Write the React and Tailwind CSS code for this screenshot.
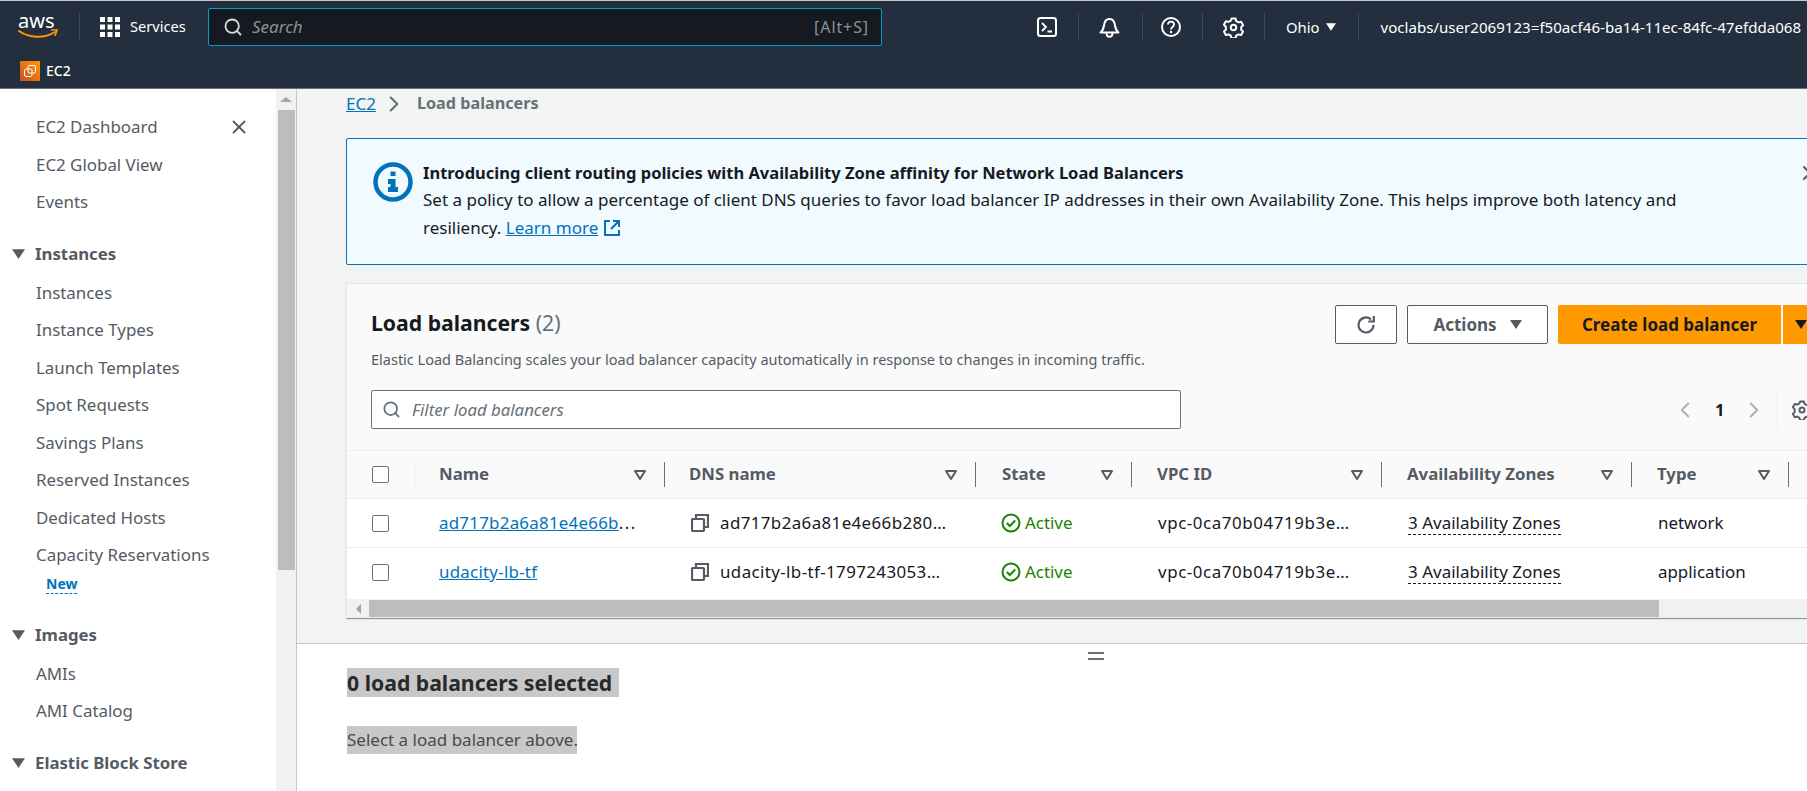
import { Search, X, ChevronRight, ChevronLeft } from 'lucide-react';

const font = "font-['Noto_Sans',sans-serif]";

const AwsLogo = () => (
  <svg width="40" height="26" viewBox="0 0 40 26" className="overflow-visible">
    <text x="0" y="14" fill="#fff" fontSize="20" fontFamily="Noto Sans, sans-serif">aws</text>
    <path d="M1 17c10 7 25 8 36 1" fill="none" stroke="#f90" strokeWidth="2" strokeLinecap="round" />
    <path d="M33 16h6l-2 6" fill="none" stroke="#f90" strokeWidth="1.6" />
  </svg>
);

const GridIcon = () => (
  <svg width="20" height="20" viewBox="0 0 20 20" fill="#fff">
    {[0, 7.5, 15].map((y) => [0, 7.5, 15].map((x) => <rect key={`${x}-${y}`} x={x} y={y} width="5" height="5" />))}
  </svg>
);

const Ec2Icon = () => (
  <div className="w-5 h-5 shrink-0 bg-gradient-to-tr from-[#c8511b] to-[#ff9900] flex items-center justify-center">
    <svg width="16" height="16" viewBox="0 0 16 16" fill="none" stroke="#fff" strokeWidth="1">
      <rect x="6" y="2.5" width="7.5" height="7.5" rx="1.5" />
      <rect x="2.5" y="6" width="7.5" height="7.5" rx="1.5" />
    </svg>
  </div>
);

const TerminalIcon = () => (
  <svg width="20" height="20" viewBox="0 0 20 20" fill="none" stroke="#fff" strokeWidth="2">
    <rect x="1" y="1" width="18" height="18" rx="2.5" />
    <path d="M5 6l4 4-4 4M10.5 14.5H15" strokeWidth="1.8" />
  </svg>
);

const BellIcon = () => (
  <svg width="21" height="21" viewBox="0 0 21 21" fill="none" stroke="#fff" strokeWidth="2">
    <path d="M1.5 15.5c2.5-2 3-3.500 3.500-7C5.500 4 7.500 2 10.500 2s5 2 5.500 6.500c.5 3.500 1 5 3.500 7z" strokeLinejoin="round" />
    <path d="M7.500 16c0 5 6 5 6 0" />
  </svg>
);

const HelpIcon = () => (
  <svg width="20" height="20" viewBox="0 0 20 20" fill="none" stroke="#fff" strokeWidth="2">
    <circle cx="10" cy="10" r="9" />
    <path d="M7 7.500C7 3.500 13 3.800 13 7.500c0 2.500-3 2.500-3 5" strokeWidth="1.8" />
    <circle cx="10" cy="15" r="1.200" fill="#fff" stroke="none" />
  </svg>
);

const GearIcon = ({ color = '#fff', size = 21 }) => (
  <svg width={size} height={size} viewBox="0 0 21 21" fill="none" stroke={color} strokeWidth="2">
    <path d="M8.500 1.500h4l.7 2.600 2.300 1.300 2.600-.7 2 3.500-1.900 1.900v2.600l1.900 1.900-2 3.500-2.600-.7-2.300 1.300-.7 2.600h-4l-.7-2.600-2.300-1.300-2.600.7-2-3.500 1.900-1.900V9.600L.9 7.700l2-3.500 2.600.7 2.300-1.300z" strokeLinejoin="round" />
    <circle cx="10.500" cy="10.500" r="2.700" />
  </svg>
);

const InfoIcon = () => (
  <svg width="40" height="40" viewBox="0 0 40 40" className="shrink-0">
    <circle cx="20" cy="20" r="17.500" fill="none" stroke="#0073bb" strokeWidth="4.500" />
    <rect x="17.500" y="9.500" width="5" height="4.500" fill="#0073bb" />
    <path d="M15 17h7.500v8H25v5H15v-5h2.500v-3H15z" fill="#0073bb" />
  </svg>
);

const ExternalIcon = () => (
  <svg width="18" height="18" viewBox="0 0 18 18" fill="none" stroke="#0073bb" strokeWidth="2" className="inline-block ml-[5px] align-[-3px]">
    <path d="M7 2H2v14h14v-5" />
    <path d="M10 2h6v6M16 2L8 10" />
  </svg>
);

const FilterCaret = () => (
  <svg width="12" height="10" viewBox="0 0 12 10" fill="none" stroke="#545b64" strokeWidth="2" className="shrink-0">
    <path d="M1 1h10L6 9z" strokeLinejoin="round" />
  </svg>
);

const SolidCaret = ({ color = '#545b64', w = 12, h = 9 }) => (
  <svg width={w} height={h} viewBox="0 0 12 9" fill={color} className="shrink-0">
    <path d="M0 0h12L6 9z" />
  </svg>
);

const CopyIcon = () => (
  <svg width="18" height="18" viewBox="0 0 18 18" fill="none" stroke="#545b64" strokeWidth="2.200" className="shrink-0">
    <rect x="1" y="5" width="12" height="12" rx="1" />
    <path d="M5 4.500V1h12v12h-3.500" />
  </svg>
);

const ActiveIcon = () => (
  <svg width="20" height="20" viewBox="0 0 20 20" fill="none" stroke="#1d8102" strokeWidth="2" className="shrink-0">
    <circle cx="10" cy="10" r="8.500" />
    <path d="M5.800 10l3 3 5.400-5.500" />
  </svg>
);

const RefreshIcon = () => (
  <svg width="20" height="20" viewBox="0 0 20 20" fill="none" stroke="#545b64" strokeWidth="2.200" >
    <path d="M17.500 10a7.500 7.500 0 1 1-2.600-5.700" />
    <path d="M17.800 1v5.500h-5.500" />
  </svg>
);

const Checkbox = () => <div className="w-[17px] h-[17px] rounded-[2px] border border-[#687078] bg-white shrink-0" />;

const Divider = () => <div className="w-px h-7 bg-[#414750]" />;

function TopBar() {
  return (
    <header className="h-[89px] shrink-0 bg-[#232f3e] border-t border-[#c8c8c8] border-b-[1px] border-b-[#687078] text-white flex flex-col">
      <div className="flex items-center h-[52px] pl-[18px] whitespace-nowrap">
        <AwsLogo />
        <div className="w-px h-7 bg-[#414750] ml-[21px] mr-[20px]" />
        <GridIcon />
        <span className="ml-[10px] text-[14.6px] w-[57px]">Services</span>
        <div className="ml-[21px] w-[674px] h-[38px] bg-[#16191f] border border-[#00a1c9] rounded-[2px] flex items-center pl-[14px] pr-[12px]">
          <Search className="w-[20px] h-[20px] text-[#d5dbdb]" strokeWidth={2.2} />
          <span className="ml-[9px] text-[17px] italic text-[#879596]">Search</span>
          <span className="ml-auto text-[16px] tracking-[0.9px] text-[#879596]">[Alt+S]</span>
        </div>
        <div className="ml-[155px] flex items-center">
          <TerminalIcon />
          <div className="ml-[21px] mr-[20px]"><Divider /></div>
          <BellIcon />
          <div className="ml-[22px] mr-[18px]"><Divider /></div>
          <HelpIcon />
          <div className="ml-[21px] mr-[20px]"><Divider /></div>
          <GearIcon />
          <div className="ml-[20px] mr-[21px]"><Divider /></div>
          <span className="text-[14.8px]">Ohio</span>
          <span className="ml-[7px]"><SolidCaret color="#fff" w={10} h={8} /></span>
          <div className="ml-[22px] mr-[21px]"><Divider /></div>
          <span className="text-[15.1px]">voclabs/user2069123=f50acf46-ba14-11ec-84fc-47efdda068</span>
        </div>
      </div>
      <div className="flex items-center pl-[20px] mt-[7px] gap-[6px]">
        <Ec2Icon />
        <span className="text-[14px] font-medium">EC2</span>
      </div>
    </header>
  );
}

const NavItem = ({ label }) => (
  <a className="block pl-[36px] h-[37.500px] leading-[37.500px] text-[16.9px] text-[#545b64] whitespace-nowrap">{label}</a>
);

const NavHead = ({ label }) => (
  <div className="flex items-center h-[39px] pl-[12px] text-[16.8px] font-bold text-[#545b64] whitespace-nowrap">
    <SolidCaret w={13} h={10} />
    <span className="ml-[10px]">{label}</span>
  </div>
);

function Sidebar() {
  return (
    <aside className="w-[297px] shrink-0 flex border-r border-[#c4c8cc] bg-white">
      <nav className="w-[276px] shrink-0 pt-[19px] relative">
        <X className="absolute left-[228px] top-[27px] w-[22px] h-[22px] text-[#545b64]" strokeWidth={2} />
        <NavItem label="EC2 Dashboard" />
        <NavItem label="EC2 Global View" />
        <NavItem label="Events" />
        <div className="h-[14px]" />
        <NavHead label="Instances" />
        <NavItem label="Instances" />
        <NavItem label="Instance Types" />
        <NavItem label="Launch Templates" />
        <NavItem label="Spot Requests" />
        <NavItem label="Savings Plans" />
        <NavItem label="Reserved Instances" />
        <NavItem label="Dedicated Hosts" />
        <NavItem label="Capacity Reservations" />
        <div className="pl-[46px] -mt-[3px] h-[31px]">
          <span className="text-[14px] font-bold text-[#0073bb] border-b border-dashed border-[#0073bb] leading-[19px] inline-block">New</span>
        </div>
        <div className="h-[14px]" />
        <NavHead label="Images" />
        <NavItem label="AMIs" />
        <NavItem label="AMI Catalog" />
        <div className="h-[14px]" />
        <NavHead label="Elastic Block Store" />
      </nav>
      <div className="w-[20px] bg-[#f1f1f1] flex flex-col items-center">
        <div className="h-[21px] flex items-center justify-center">
          <div className="w-0 h-0 border-x-[6px] border-x-transparent border-b-[5px] border-b-[#a3a3a3]" />
        </div>
        <div className="w-[17px] h-[460px] bg-[#bdbdbd]" />
      </div>
    </aside>
  );
}

const columns = [
  { label: 'Name', w: 'w-[250px] pl-[24px]' },
  { label: 'DNS name', w: 'w-[311px] pl-[24px]' },
  { label: 'State', w: 'w-[156px] pl-[26px]' },
  { label: 'VPC ID', w: 'w-[250px] pl-[25px]' },
  { label: 'Availability Zones', w: 'w-[250px] pl-[25px]' },
  { label: 'Type', w: 'w-[157px] pl-[25px]' },
];

const rows = [
  { name: 'ad717b2a6a81e4e66b', nameEllipsis: true, dns: 'ad717b2a6a81e4e66b280…', type: 'network' },
  { name: 'udacity-lb-tf', dns: 'udacity-lb-tf-1797243053…', type: 'application' },
];

function Table() {
  return (
    <div>
      <div className="flex h-[49px] bg-[#fafafa] border-y border-[#eaeded] items-center whitespace-nowrap">
        <div className="w-[68px] h-[25px] pl-[25px] flex items-center border-r border-[#eaeded] shrink-0">
          <Checkbox />
        </div>
        {columns.map((c) => (
          <div key={c.label} className={`${c.w} shrink-0 h-[25px] pr-[18px] flex items-center justify-between border-r border-[#687078] text-[16.8px] font-bold text-[#545b64]`}>
            <span className="-mt-[2px]">{c.label}</span>
            <FilterCaret />
          </div>
        ))}
      </div>
      {rows.map((r, i) => (
        <div key={r.name} className={`flex items-center h-[49px] bg-white whitespace-nowrap text-[16.9px] text-[#16191f] ${i === 0 ? 'border-b border-[#eaeded]' : 'h-[51px] pb-[3px]'}`}>
          <div className="w-[68px] pl-[25px] shrink-0"><Checkbox /></div>
          <div className="w-[250px] pl-[24px] shrink-0 tracking-[0.25px]">
            <a className="text-[#0073bb] underline">{r.name}</a>{r.nameEllipsis && <span className="tracking-[1.500px]">...</span>}
          </div>
          <div className="w-[311px] pl-[26px] shrink-0 flex items-center gap-[11px]">
            <CopyIcon />
            <span className="tracking-[0.4px]">{r.dns}</span>
          </div>
          <div className="w-[156px] pl-[25px] shrink-0 flex items-center gap-[4px] text-[#1d8102]">
            <ActiveIcon />
            <span>Active</span>
          </div>
          <div className="w-[250px] pl-[26px] shrink-0 tracking-[0.58px]">vpc-0ca70b04719b3e…</div>
          <div className="w-[250px] pl-[26px] shrink-0">
            <span className="border-b border-dashed border-[#16191f] text-[17px]">3 Availability Zones</span>
          </div>
          <div className="w-[157px] pl-[26px] shrink-0">{r.type}</div>
        </div>
      ))}
      <div className="h-[19px] bg-[#f1f1f1] flex items-center">
        <div className="w-[22px] flex justify-center">
          <div className="w-0 h-0 border-y-[5px] border-y-transparent border-r-[5px] border-r-[#a3a3a3]" />
        </div>
        <div className="w-[1290px] h-[17px] bg-[#bdbdbd]" />
      </div>
    </div>
  );
}

function Main() {
  return (
    <main className="flex-1 min-w-0 flex flex-col bg-white overflow-hidden">
      <div className="h-[555px] shrink-0 bg-[#f2f3f3] border-b border-[#c4c8cc] pl-[49px] overflow-hidden">
        <div className="w-[1600px]">
          <div className="flex items-center h-[29px] text-[16px]">
            <a className="text-[#0073bb] underline text-[17px]">EC2</a>
            <ChevronRight className="w-[26px] h-[26px] text-[#687078] ml-[5px] mr-[10px]" strokeWidth={2} />
            <span className="font-bold text-[#687078] text-[16.2px]">Load balancers</span>
          </div>
          <section className="mt-[20px] h-[127px] border border-[#0073bb] rounded-[2px] bg-[#f1faff] flex pl-[26px] pt-[23px] relative">
            <InfoIcon />
            <div className="ml-[10px] -mt-[2px] w-[1270px] text-[17px] leading-[28px] text-[#16191f]">
              <div className="font-bold text-[16.5px] leading-[26px]">Introducing client routing policies with Availability Zone affinity for Network Load Balancers</div>
              <p>Set a policy to allow a percentage of client DNS queries to favor load balancer IP addresses in their own Availability Zone. This helps improve both latency and resiliency. <a className="text-[#0073bb] underline">Learn more</a><ExternalIcon /></p>
            </div>
            <X className="absolute left-[1451px] top-[22px] w-[24px] h-[24px] text-[#545b64]" strokeWidth={2} />
          </section>
          <section className="mt-[19px] bg-white border-l border-[#eaeded] border-b border-b-[#879596] shadow-[0_0_1px_rgba(0,28,36,0.3)]">
            <div className="h-[166px] bg-[#fafafa] pl-[24px] relative">
              <div className="flex pt-[21px]">
                <div className="w-[964px] shrink-0">
                  <h2 className="text-[21.2px] font-bold text-[#16191f] leading-[36px]">Load balancers <span className="font-normal text-[#687078]">(2)</span></h2>
                  <p className="mt-[8px] text-[14.5px] leading-[20px] text-[#545b64] whitespace-nowrap">Elastic Load Balancing scales your load balancer capacity automatically in response to changes in incoming traffic.</p>
                </div>
                <div className="flex h-[39px] shrink-0 whitespace-nowrap">
                  <button className="w-[62px] border border-[#545b64] rounded-[2px] bg-white flex items-center justify-center"><RefreshIcon /></button>
                  <button className="ml-[10px] w-[141px] border border-[#545b64] rounded-[2px] bg-white flex items-center justify-center gap-[13px] text-[17px] font-bold text-[#545b64]">Actions <SolidCaret /></button>
                  <button className="ml-[10px] w-[223px] bg-[#ff9900] rounded-l-[2px] text-[17px] font-bold text-[#16191f]">Create load balancer</button>
                  <button className="ml-[2px] w-[60px] bg-[#ff9900] pl-[12px]"><SolidCaret color="#16191f" /></button>
                </div>
              </div>
              <div className="absolute left-[24px] top-[106px] w-[810px] h-[39px] bg-white border border-[#687078] rounded-[2px] flex items-center pl-[10px]">
                <Search className="w-[19px] h-[19px] text-[#687078]" strokeWidth={2.2} />
                <span className="ml-[11px] text-[16.8px] italic text-[#687078]">Filter load balancers</span>
              </div>
              <div className="absolute left-[1325px] top-[106px] h-[40px] flex items-center whitespace-nowrap">
                <ChevronLeft className="w-[26px] h-[26px] text-[#aab7b8]" strokeWidth={2} />
                <span className="ml-[17px] mr-[17px] text-[16.5px] font-bold text-[#16191f]">1</span>
                <ChevronRight className="w-[26px] h-[26px] text-[#aab7b8]" strokeWidth={2} />
                <div className="ml-[10px] mr-[14px] w-px h-[40px] bg-[#eaeded]" />
                <GearIcon color="#545b64" size={20} />
              </div>
            </div>
            <Table />
          </section>
        </div>
      </div>
      <div className="pl-[50px] pt-[8px]">
        <div className="ml-[741px] w-[16px] h-[8px] border-y-2 border-[#687078]" />
        <h2 className="mt-[8px] w-[272px] h-[29px] bg-[#c8c8c8] text-[21.2px] font-bold leading-[29px] text-[#2a2a2a] whitespace-nowrap">0 load balancers selected</h2>
        <p className="mt-[29px] w-[230px] h-[28px] bg-[#c8c8c8] text-[17px] leading-[28px] text-[#4a4a4a] whitespace-nowrap">Select a load balancer above.</p>
      </div>
    </main>
  );
}

export default function App() {
  return (
    <div className={`${font} h-screen w-full flex flex-col overflow-hidden bg-white`}>
      <TopBar />
      <div className="flex flex-1 min-h-0">
        <Sidebar />
        <Main />
      </div>
    </div>
  );
}
